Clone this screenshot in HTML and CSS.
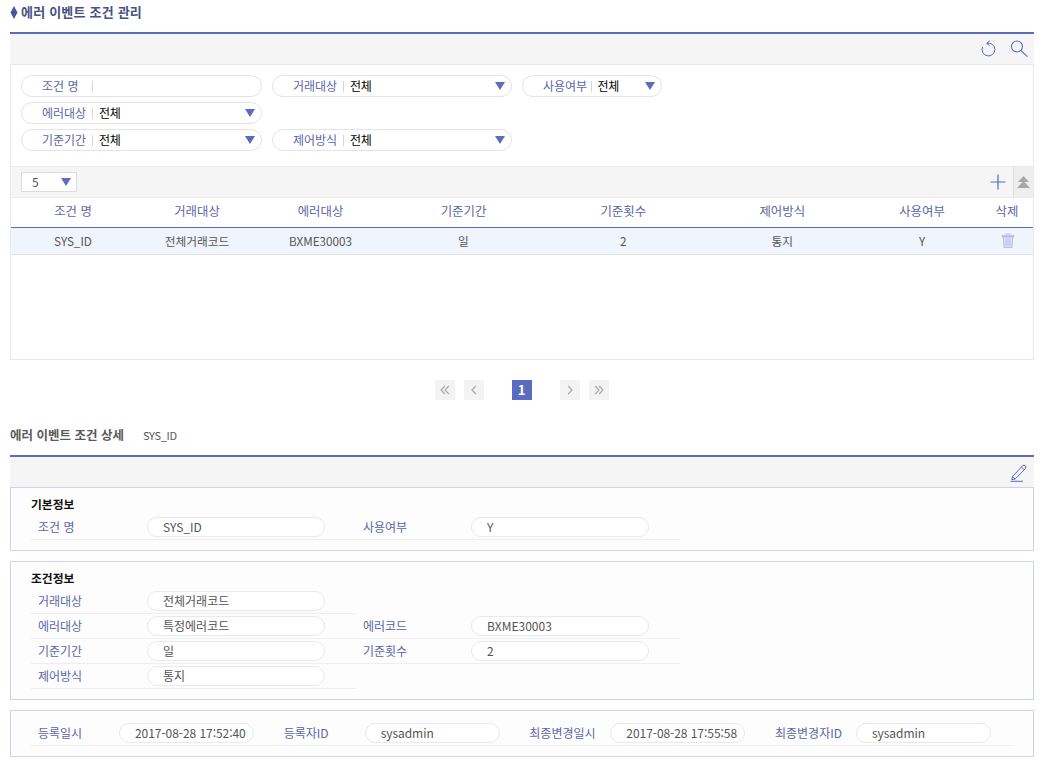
FILE: index.html
```html
<!DOCTYPE html>
<html lang="ko">
<head>
<meta charset="utf-8">
<title>에러 이벤트 조건 관리</title>
<link rel="stylesheet" href="styles.css">
</head>
<body>
<div class="page">
  <h1 class="title"><svg class="diamond" width="8" height="13" viewBox="0 0 8 13"><path d="M4 0L7.5 6.5L4 13L.5 6.5Z"/></svg>에러 이벤트 조건 관리</h1>

  <div class="bar">
    <svg class="ico" width="20" height="20" viewBox="0 0 20 20" fill="none" stroke="#5a6bc0" stroke-width="1"><path d="M8 4.3A6.4 6.4 0 1 1 3.6 8"/><path d="M10.8 1.8L7.6 4.3L10.6 6.6" /></svg>
    <svg class="ico" width="20" height="20" viewBox="0 0 20 20" fill="none" stroke="#5a6bc0" stroke-width="1.1"><circle cx="8" cy="7.5" r="5.5"/><path d="M12 11.6L18.4 17.6"/></svg>
  </div>

  <div class="panel">
    <div class="filters">
      <div class="frow">
        <div class="fld w241"><span class="lab">조건 명</span><span class="sep"></span><span class="val"></span></div>
        <div class="fld w240"><span class="lab">거래대상</span><span class="sep"></span><span class="val">전체</span><i class="arrow"></i></div>
        <div class="fld w140"><span class="lab">사용여부</span><span class="sep"></span><span class="val">전체</span><i class="arrow"></i></div>
      </div>
      <div class="frow">
        <div class="fld w241"><span class="lab">에러대상</span><span class="sep"></span><span class="val">전체</span><i class="arrow"></i></div>
      </div>
      <div class="frow">
        <div class="fld w241"><span class="lab">기준기간</span><span class="sep"></span><span class="val">전체</span><i class="arrow"></i></div>
        <div class="fld w240"><span class="lab">제어방식</span><span class="sep"></span><span class="val">전체</span><i class="arrow"></i></div>
      </div>
    </div>

    <div class="gridbar">
      <div class="pagesize"><span>5</span><i class="arrow"></i></div>
      <svg class="plus" width="16" height="16" viewBox="0 0 16 16" fill="none" stroke="#5a6bc0" stroke-width="1.2"><path d="M8 .5V15.5M.5 8H15.5"/></svg>
      <div class="collapse"><svg width="13" height="13" viewBox="0 0 13 13" fill="#a8a8a8"><path d="M6.5 0L12 6H1Z"/><path d="M6.5 5L13 12H0Z"/></svg></div>
    </div>

    <table class="grid">
      <colgroup><col class="c1"><col class="c2"><col class="c3"><col class="c4"><col class="c5"><col class="c6"><col class="c7"><col class="c8"></colgroup>
      <thead>
        <tr><th>조건 명</th><th>거래대상</th><th>에러대상</th><th>기준기간</th><th>기준횟수</th><th>제어방식</th><th>사용여부</th><th>삭제</th></tr>
      </thead>
      <tbody>
        <tr><td>SYS_ID</td><td>전체거래코드</td><td>BXME30003</td><td>일</td><td>2</td><td>통지</td><td>Y</td>
          <td class="del"><svg class="trash" width="14" height="15" viewBox="0 0 14 15" fill="#dfe3f5" stroke="#aab4e2" stroke-width=".8"><path d="M1 2.6H13V3.8H1Z"/><path d="M5 2.4V1H9V2.4" fill="none"/><path d="M2.2 4H11.8L11 14.4H3Z"/><path d="M5 5.5V13M7 5.5V13M9 5.5V13" fill="none"/></svg></td></tr>
      </tbody>
    </table>
  </div>

  <div class="pager">
    <span class="pg"><svg width="10" height="10" viewBox="0 0 10 10" fill="none" stroke="#a9a9a9" stroke-width="1.2"><path d="M4.8 1L1 5L4.8 9M8.8 1L5 5L8.8 9"/></svg></span>
    <span class="pg"><svg width="10" height="10" viewBox="0 0 10 10" fill="none" stroke="#a9a9a9" stroke-width="1.2"><path d="M6.8 1L3 5L6.8 9"/></svg></span>
    <span class="pg cur">1</span>
    <span class="pg"><svg width="10" height="10" viewBox="0 0 10 10" fill="none" stroke="#a9a9a9" stroke-width="1.2"><path d="M3.2 1L7 5L3.2 9"/></svg></span>
    <span class="pg"><svg width="10" height="10" viewBox="0 0 10 10" fill="none" stroke="#a9a9a9" stroke-width="1.2"><path d="M1.2 1L5 5L1.2 9M5.2 1L9 5L5.2 9"/></svg></span>
  </div>

  <div class="subhead"><h2>에러 이벤트 조건 상세</h2><span>SYS_ID</span></div>

  <div class="bar barsub">
    <svg class="ico" width="18" height="19" viewBox="0 0 18 19" fill="none" stroke="#5a6bc0" stroke-width="1"><path d="M2.5 13.5L12.8 2.6Q14 1.6 15.2 2.6T15.6 5.4L5.2 16L1.8 16.6Z"/><path d="M11.4 4L14.2 6.8M2.5 13.5L5.2 16"/><path d="M.5 18.3H13"/></svg>
  </div>

  <section class="box">
    <h3>기본정보</h3>
    <div class="drow"><span class="dl">조건 명</span><span class="dv">SYS_ID</span><span class="dl dl2">사용여부</span><span class="dv">Y</span></div>
  </section>

  <section class="box">
    <h3>조건정보</h3>
    <div class="drow half"><span class="dl">거래대상</span><span class="dv">전체거래코드</span></div>
    <div class="drow"><span class="dl">에러대상</span><span class="dv">특정에러코드</span><span class="dl dl2">에러코드</span><span class="dv">BXME30003</span></div>
    <div class="drow"><span class="dl">기준기간</span><span class="dv">일</span><span class="dl dl2">기준횟수</span><span class="dv">2</span></div>
    <div class="drow half"><span class="dl">제어방식</span><span class="dv">통지</span></div>
  </section>

  <section class="box meta">
    <div class="mrow">
      <span class="ml">등록일시</span><span class="mv">2017-08-28 17:52:40</span>
      <span class="ml">등록자ID</span><span class="mv">sysadmin</span>
      <span class="ml">최종변경일시</span><span class="mv">2017-08-28 17:55:58</span>
      <span class="ml">최종변경자ID</span><span class="mv">sysadmin</span>
    </div>
  </section>
</div>
</body>
</html>
```

FILE: styles.css
```css
* { box-sizing: border-box; }
html, body { margin: 0; padding: 0; background: #fff; }
body { font: 12px/18px "Noto Sans CJK KR", "Noto Sans", sans-serif; color: #555; overflow: hidden; }
.page { width: 1024px; margin-left: 10px; }

.title { display: flex; align-items: center; gap: 3px; height: 32px; margin: 0; padding: 0 0 8px; font-size: 13px; font-weight: 700; letter-spacing: .2px; color: #46537f; }
.diamond { fill: #46579f; }

.bar { display: flex; justify-content: flex-end; align-items: center; gap: 10px; height: 33px; padding: 0 5px 0 0; background: #f5f5f5; border-top: 2px solid #5a6bc0; border-bottom: 1px solid #e9e9e9; }
.ico { display: block; }

.panel { border: 1px solid #eaeaea; border-top: 0; height: 295px; }
.filters { padding: 10px 10px 15px; height: 101px; }
.frow { display: flex; gap: 10px; margin-bottom: 5px; }
.fld { display: flex; align-items: center; height: 22px; padding-left: 20px; padding-right: 6px; border: 1px solid #e4e4e4; border-radius: 11px; background: #fff; }
.w241 { width: 241px; }
.w240 { width: 240px; }
.w140 { width: 140px; }
.lab { width: 50px; color: #5b66a8; white-space: nowrap; }
.w140 .lab { width: 47.5px; }
.sep { width: 1px; height: 11px; background: #cfd3e6; margin-right: 6px; }
.val { flex: 1; color: #000; font-weight: 400; letter-spacing: -.3px; }
.arrow { display: block; width: 0; height: 0; border-left: 5.5px solid transparent; border-right: 5.5px solid transparent; border-top: 8px solid #5a6bc0; }

.gridbar { display: flex; align-items: center; height: 32px; padding-left: 10px; background: #f5f5f5; border-top: 1px solid #ececec; border-bottom: 1px solid #ececec; }
.pagesize { display: flex; align-items: center; justify-content: space-between; width: 56px; height: 20px; padding: 0 5px 0 10px; background: #fff; border: 1px solid #dcdcdc; }
.plus { margin-left: auto; margin-right: 7px; }
.collapse { display: flex; align-items: center; justify-content: center; width: 20px; height: 100%; background: #eeeeee; border-left: 1px solid #dcdcdc; }

.grid { width: 100%; border-collapse: collapse; table-layout: fixed; }
.c1, .c2 { width: 124px; }
.c3 { width: 123px; }
.c4 { width: 163px; }
.c5 { width: 156.5px; }
.c6 { width: 161.5px; }
.c7 { width: 118px; }
.grid th { height: 29px; padding: 0 0 2px; font-size: 12.4px; font-weight: 400; color: #5b66a8; border-bottom: 1px solid #5a6bc0; }
.grid td { height: 27px; padding: 0; font-size: 11.7px; text-align: center; background: #f0f4fc; border-bottom: 1px solid #e3e3e3; }
.grid .del { padding-left: 1px; }
.trash { display: block; margin: 0 auto; }

.pager { display: flex; justify-content: center; align-items: center; gap: 9px; height: 20px; margin-top: 20px; padding-right: 1px; }
.pg { display: flex; align-items: center; justify-content: center; width: 20px; height: 20px; background: #f3f3f3; }
.cur { margin: 0 19px; background: #5a6bc0; color: #fff; font-weight: 700; font-size: 13px; }

.subhead { display: flex; align-items: center; gap: 19px; height: 55px; padding-top: 15px; }
.subhead h2 { margin: 0; font-size: 12.5px; font-weight: 700; color: #5a5a5a; }
.subhead span { font-size: 11px; letter-spacing: -.3px; color: #555; }
.barsub { height: 32px; padding-right: 6px; border-bottom: 0; }

.box { background: #fdfdfd; border: 1px solid #cdd3ee; margin-bottom: 10px; padding: 0 20px 10px; }
.box h3 { margin: 0; height: 27px; padding-top: 7px; font-size: 11.8px; line-height: 18px; font-weight: 700; color: #111; }
.drow { display: flex; align-items: center; width: 649px; height: 25px; padding-top: 2px; padding-bottom: 3px; border-bottom: 1px solid #eeeeee; }
.half { width: 325px; }
.dl { flex: none; width: 116px; padding-left: 7px; color: #5b66a8; white-space: nowrap; }
.dl2 { width: 146px; padding-left: 38px; }
.dv { flex: none; width: 178px; height: 20px; padding-left: 15px; line-height: 18px; border: 1px solid #e9e9e9; border-radius: 10px; background: #fff; white-space: nowrap; }

.meta { height: 47px; padding: 10px 20px 0; }
.mrow { display: flex; align-items: center; width: 982px; height: 25px; padding-top: 2px; padding-bottom: 3px; border-bottom: 1px solid #eeeeee; }
.ml { flex: none; width: 88px; padding-left: 7px; color: #5b66a8; white-space: nowrap; }
.mv { flex: none; width: 135px; height: 20px; margin-right: 22.67px; padding-left: 15px; line-height: 18px; letter-spacing: -.05px; border: 1px solid #e9e9e9; border-radius: 10px; background: #fff; white-space: nowrap; }
.mv:last-child { margin-right: 0; }
```
